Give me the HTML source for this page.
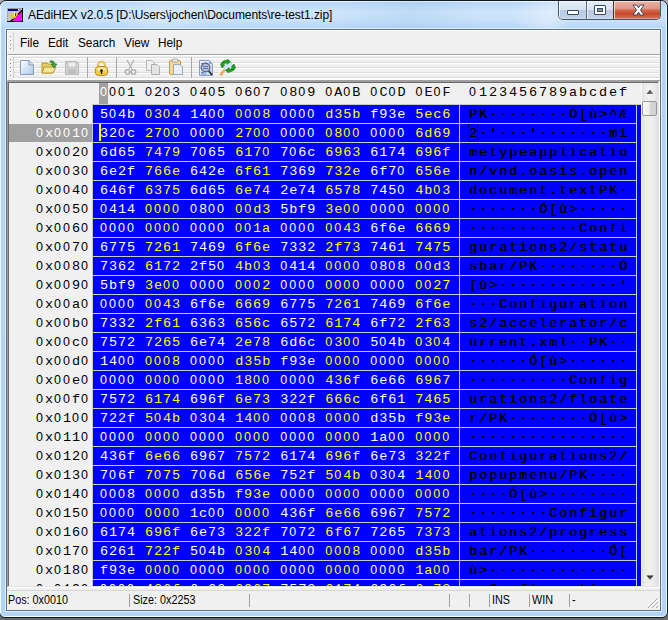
<!DOCTYPE html><html><head><meta charset="utf-8"><style>
*{margin:0;padding:0;box-sizing:border-box}
html,body{width:668px;height:620px;overflow:hidden;background:#6a6a6a}
body{position:relative;font-family:"Liberation Sans",sans-serif}
.a{position:absolute}
#frame{left:-1px;top:0;width:669px;height:618px;border:1px solid #101820;border-radius:7px 7px 6px 6px;overflow:hidden;
 background:linear-gradient(180deg,#b4d6f8 1px,#c4def9 6px,#cfe5fa 11px,#c8e0f9 20px,#b4d6f8 27px,#b4d4f4 40px,#b2d4f4 100%);}
#frame:before{content:"";position:absolute;left:0;top:0;right:0;bottom:0;border:1px solid rgba(240,250,255,.95);border-radius:6px 6px 5px 5px}
#streak{left:0;top:1px;width:668px;height:27px;background:linear-gradient(105deg,rgba(255,255,255,0) 120px,rgba(255,255,255,.22) 160px,rgba(255,255,255,0) 220px,rgba(150,190,230,0) 330px,rgba(150,190,230,.25) 400px,rgba(150,190,230,0) 470px,rgba(255,255,255,0) 500px,rgba(255,255,255,.35) 535px,rgba(255,255,255,0) 560px)}
#title{left:28px;top:8px;font-size:12px;color:#000;white-space:nowrap;letter-spacing:-0.07px}
#client{left:6px;top:29px;width:655px;height:582px;border:1px solid #5e7084;background:#f0f0f0}
.mono{font-family:"Liberation Mono",monospace;font-size:13.5px;line-height:18px;white-space:pre;letter-spacing:0.9px}
.asc{letter-spacing:1.9px !important;text-shadow:0.6px 0 0 #000}
.z{font-family:"Liberation Sans",sans-serif;font-size:12.5px;letter-spacing:2.05px;line-height:0;font-weight:normal}
.asc .z{letter-spacing:3.05px}
.menu{font-size:12px;color:#000;top:36px;white-space:nowrap;transform:scaleX(0.98);transform-origin:0 0}
.grip{width:1px;height:1px;background:#8c8c8c;box-shadow:1px 1px 0 #fff}
.sep{width:1px;background:#b8b8b8;border-right:1px solid #fff}
.hl{background:#ffffff}
.status{font-size:12px;color:#000;top:593px;white-space:nowrap;transform:scaleX(0.9);transform-origin:0 0}
.ssep{top:594px;width:1px;height:13px;background:#a0a0a0}
</style></head><body>
<div class="a" style="left:0;top:0;width:668px;height:10px;background:#a8a8a8"></div>
<div id="frame" class="a"></div>
<div id="streak" class="a"></div>
<div class="a" style="left:5px;top:28px;width:657px;height:584px;border:1px solid #dcefff"></div>
<svg class="a" style="left:7px;top:8px" width="16" height="14" viewBox="0 0 16 14" shape-rendering="crispEdges">
<rect x="0" y="0" width="16" height="14" fill="#c4c4c4"/>
<rect x="0" y="0" width="16" height="1" fill="#9a9aa8"/>
<rect x="0" y="0" width="1" height="14" fill="#a8a8a8"/>
<rect x="1" y="1" width="10" height="2" fill="#0a0a88"/>
<rect x="11" y="1" width="4" height="2" fill="#9c9c9c"/>
<rect x="11" y="1" width="1" height="1" fill="#fff"/><rect x="14" y="1" width="1" height="1" fill="#fff"/>
<polygon points="15,3 15,13 4,13" fill="#ff10ff" shape-rendering="auto"/>
<rect x="15" y="0" width="1" height="14" fill="#000"/>
<rect x="0" y="13" width="16" height="1" fill="#101010"/>
<line x1="15.5" y1="2" x2="3.5" y2="13.5" stroke="#000" stroke-width="1.3" shape-rendering="auto"/>
<rect x="7" y="8" width="1" height="1" fill="#c000c0"/><rect x="10" y="8" width="1" height="1" fill="#c000c0"/><rect x="13" y="6" width="1" height="1" fill="#c000c0"/>
<rect x="7" y="11" width="1" height="1" fill="#c000c0"/><rect x="10" y="11" width="1" height="1" fill="#c000c0"/><rect x="13" y="9" width="1" height="1" fill="#c000c0"/><rect x="13" y="12" width="1" height="1" fill="#c000c0"/>
<path d="M3 8 L6 5 L8 6 L10 5 L11 7 L8 10 L6 11Z" fill="#d8d020" shape-rendering="auto"/>
<rect x="7" y="4" width="1" height="4" fill="#f8f8f8"/><rect x="8" y="5" width="1" height="3" fill="#404040"/>
</svg>
<div id="title" class="a">AEdiHEX v2.0.5 [D:\Users\jochen\Documents\re-test1.zip]</div>
<div class="a" style="left:558px;top:1px;width:103px;height:19px;border:1px solid #4a5664;border-top:none;border-radius:0 0 5px 5px;overflow:hidden">
 <div class="a" style="left:0;top:0;width:28px;height:18px;background:linear-gradient(#e4edf7 0,#d6e2f0 50%,#b9cde4 52%,#bccfe6 85%,#cddcee 100%);border-right:1px solid #5a6a7c;box-shadow:inset 1px 1px 0 rgba(255,255,255,.7)"></div>
 <div class="a" style="left:28px;top:0;width:27px;height:18px;background:linear-gradient(#e4edf7 0,#d6e2f0 50%,#b9cde4 52%,#bccfe6 85%,#cddcee 100%);border-right:1px solid #5a2a20;box-shadow:inset 1px 1px 0 rgba(255,255,255,.7)"></div>
 <div class="a" style="left:55px;top:0;width:48px;height:18px;background:linear-gradient(#eab0a4 0,#e09a8a 40%,#d5674c 52%,#c8482c 70%,#d27058 100%);box-shadow:inset 1px 1px 0 rgba(255,230,225,.8),inset -1px -1px 0 rgba(255,200,190,.5)"></div>
 <div class="a" style="left:8px;top:9px;width:12px;height:5px;background:#fff;border:1px solid #3b4858;border-radius:1px"></div>
 <div class="a" style="left:35px;top:4px;width:12px;height:10px;background:#fff;border:1px solid #3b4858;border-radius:1px"></div>
 <div class="a" style="left:38px;top:7px;width:6px;height:4px;background:#8aa0b8;border:1px solid #3b4858"></div>
 <svg class="a" style="left:73px;top:3px" width="13" height="12" viewBox="0 0 13 12"><polygon points="1,1 4.6,1 6.5,3.8 8.4,1 12,1 8.5,6 12,11 8.4,11 6.5,8.2 4.6,11 1,11 4.5,6" fill="#fff" stroke="#3b4858" stroke-width="1" stroke-linejoin="round"/></svg>
</div>
<div id="client" class="a"></div>
<div class="a" style="left:7px;top:30px;width:653px;height:25px;background:#f0f0f0;border-top:1px solid #fff;border-left:1px solid #fff;border-bottom:1px solid #a0a0a0"></div>
<div class="a grip" style="left:10px;top:36px"></div>
<div class="a grip" style="left:10px;top:40px"></div>
<div class="a grip" style="left:10px;top:44px"></div>
<div class="a grip" style="left:10px;top:48px"></div>
<div class="a" style="left:13px;top:32px;width:1px;height:20px;background:#d0d0d0"></div>
<div class="a menu" style="left:20px">File</div>
<div class="a menu" style="left:48px">Edit</div>
<div class="a menu" style="left:78px">Search</div>
<div class="a menu" style="left:124px">View</div>
<div class="a menu" style="left:158px">Help</div>
<div class="a" style="left:7px;top:55px;width:653px;height:26px;background:#f0f0f0;border-top:1px solid #ffffff;border-left:1px solid #fff;border-bottom:1px solid #a0a0a0"></div>
<div class="a" style="left:14px;top:57px;width:645px;height:1px;background:#dcdcdc"></div><div class="a" style="left:14px;top:62px;width:645px;height:1px;background:#dcdcdc"></div><div class="a" style="left:14px;top:67px;width:645px;height:1px;background:#dcdcdc"></div><div class="a" style="left:14px;top:72px;width:645px;height:1px;background:#dcdcdc"></div><div class="a" style="left:14px;top:77px;width:645px;height:1px;background:#dcdcdc"></div><div class="a" style="left:14px;top:58px;width:645px;height:1px;background:#ffffff"></div><div class="a" style="left:14px;top:63px;width:645px;height:1px;background:#ffffff"></div><div class="a" style="left:14px;top:68px;width:645px;height:1px;background:#ffffff"></div><div class="a" style="left:14px;top:73px;width:645px;height:1px;background:#ffffff"></div><div class="a" style="left:14px;top:78px;width:645px;height:1px;background:#ffffff"></div><div class="a" style="left:14px;top:79px;width:645px;height:1px;background:#ffffff"></div>
<div class="a grip" style="left:10px;top:59px"></div>
<div class="a grip" style="left:10px;top:63px"></div>
<div class="a grip" style="left:10px;top:67px"></div>
<div class="a grip" style="left:10px;top:71px"></div>
<div class="a grip" style="left:10px;top:75px"></div>
<div class="a" style="left:13px;top:57px;width:1px;height:21px;background:#d0d0d0"></div>
<div class="a" style="left:87px;top:57px;width:1px;height:21px;background:#a8a8a8"></div>
<div class="a" style="left:116px;top:57px;width:1px;height:21px;background:#a8a8a8"></div>
<div class="a" style="left:191px;top:57px;width:1px;height:21px;background:#a8a8a8"></div>

<svg class="a" style="left:19px;top:59px" width="16" height="17" viewBox="0 0 16 17">
 <defs><linearGradient id="gd" x1="0" y1="0" x2="1" y2="1"><stop offset="0" stop-color="#ffffff"/><stop offset="1" stop-color="#a9c9ea"/></linearGradient></defs>
 <path d="M1.5 1.5 H10 L14.5 6 V15.5 H1.5Z" fill="url(#gd)" stroke="#8a9ab8"/>
 <path d="M10 1.5 V6 H14.5" fill="#c8dcf2" stroke="#8a9ab8"/>
</svg>
<svg class="a" style="left:41px;top:59px" width="17" height="16" viewBox="0 0 17 16">
 <path d="M1 4 H6 L7 5 H12 V14 H1Z" fill="#e9cf6a" stroke="#b8962a"/>
 <path d="M3 8 H15 L12 14 H1Z" fill="#f6e59a" stroke="#b8962a"/>
 <path d="M9 2 Q13 1 14 5 L16 5 L13 9 L10 5 L12 5 Q11 3 9 3Z" fill="#3ca43c" stroke="#207020" stroke-width="0.6"/>
</svg>
<svg class="a" style="left:64px;top:60px" width="16" height="16" viewBox="0 0 16 16">
 <path d="M1.5 1.5 H13 L14.5 3 V14.5 H1.5Z" fill="#d0d0d0" stroke="#b8b8b8"/>
 <rect x="4" y="2" width="8" height="5" fill="#ececec" stroke="#c0c0c0" stroke-width="0.8"/>
 <rect x="4" y="9.5" width="8" height="5" fill="#bdbdbd" stroke="#c8c8c8" stroke-width="0.8"/>
</svg>
<svg class="a" style="left:94px;top:60px" width="15" height="17" viewBox="0 0 15 17">
 <path d="M4 7 V5 A3.5 3.3 0 0 1 11 5 V7" fill="none" stroke="#d8a830" stroke-width="2"/>
 <path d="M4 7 V5 A3.5 3.3 0 0 1 11 5 V7" fill="none" stroke="#f8e080" stroke-width="0.8"/>
 <rect x="1.3" y="6.5" width="12.4" height="9" rx="3.5" fill="#f5cc48" stroke="#b88a20"/>
 <rect x="2.5" y="7.5" width="10" height="3" rx="1.5" fill="#fae8a0"/>
 <path d="M7.5 10 V14" stroke="#181818" stroke-width="1.4"/><circle cx="7.5" cy="10.5" r="1.3" fill="#181818"/>
</svg>
<svg class="a" style="left:124px;top:59px" width="13" height="17" viewBox="0 0 13 17">
 <path d="M3 1 L8 10 M10 1 L5 10" stroke="#b0b0b0" stroke-width="1.3"/>
 <circle cx="3.5" cy="13" r="2.3" fill="none" stroke="#a8a8a8" stroke-width="1.3"/>
 <circle cx="9.5" cy="13" r="2.3" fill="none" stroke="#a8a8a8" stroke-width="1.3"/>
</svg>
<svg class="a" style="left:145px;top:59px" width="16" height="17" viewBox="0 0 16 17">
 <path d="M1.5 1.5 H7 L9.5 4 V11.5 H1.5Z" fill="#f0f0f0" stroke="#b8b8b8"/>
 <path d="M6.5 5.5 H12 L14.5 8 V15.5 H6.5Z" fill="#e4e4e4" stroke="#b0b0b0"/>
</svg>
<svg class="a" style="left:168px;top:58px" width="16" height="18" viewBox="0 0 16 18">
 <rect x="1.5" y="2.5" width="11" height="14" rx="1.5" fill="#f2d795" stroke="#d19a32"/>
 <rect x="4" y="1" width="6" height="3" rx="1" fill="#e8e8e8" stroke="#9a9a9a" stroke-width="0.8"/>
 <path d="M5.5 6.5 H12 L14.5 9 V16.5 H5.5Z" fill="#e8eff8" stroke="#9aaac0"/>
</svg>
<svg class="a" style="left:198px;top:59px" width="16" height="18" viewBox="0 0 16 18">
 <defs><linearGradient id="fd" x1="0" y1="0" x2="1" y2="1"><stop offset="0" stop-color="#f4f8ff"/><stop offset="1" stop-color="#b8d4f0"/></linearGradient></defs>
 <path d="M1.5 1.5 H11 L14.5 5 V16.5 H1.5Z" fill="url(#fd)" stroke="#8c9ad4"/>
 <path d="M11 1.5 V5 H14.5Z" fill="#78a8e8"/>
 <path d="M3 4.5 H6 M3 13.5 H6 M3 15 H8" stroke="#6a88d0" stroke-width="1"/>
 <circle cx="7.5" cy="8.5" r="4.3" fill="#b4c4ea" stroke="#6a6a70" stroke-width="1.4"/>
 <path d="M5 7.5 H10 M5 9.5 H10" stroke="#5a70b0" stroke-width="1"/>
 <path d="M10.8 12 L14 16" stroke="#2a2a2a" stroke-width="1.8"/>
</svg>
<svg class="a" style="left:219px;top:59px" width="18" height="18" viewBox="0 0 18 18">
 <path d="M5 11.5 L2 15.5" stroke="#f0a850" stroke-width="2.6" stroke-linecap="round"/>
 <circle cx="9" cy="7.2" r="4.6" fill="#d0e6f6" stroke="#9ac0e0" stroke-width="0.8"/>
 <path d="M1.5 5.5 Q3 1 8.5 1.2 L8 0 L11.5 2.5 L8 5.5 L8.4 3.8 Q5 3.8 4.2 6.2 L5.8 6 L3 9Z" fill="#1ea01e" stroke="#0a6a0a" stroke-width="0.5"/>
 <path d="M16.5 8.5 Q15 13 9.5 12.8 L10 14 L6.5 11.5 L10 8.5 L9.6 10.2 Q13 10.2 13.8 7.8 L12.2 8 L15 5Z" fill="#1ea01e" stroke="#0a6a0a" stroke-width="0.5"/>
</svg>

<div class="a" style="left:7px;top:81px;width:653px;height:1px;background:#a0a0a0"></div>
<div class="a" style="left:7px;top:81px;width:1px;height:506px;background:#a0a0a0"></div>
<div class="a" style="left:8px;top:82px;width:651px;height:1px;background:#696969"></div>
<div class="a" style="left:8px;top:82px;width:1px;height:504px;background:#696969"></div>
<div class="a" style="left:8px;top:586px;width:651px;height:1px;background:#e3e3e3"></div>
<div class="a" style="left:7px;top:587px;width:653px;height:1px;background:#ffffff"></div>
<div class="a" style="left:658px;top:82px;width:1px;height:505px;background:#e3e3e3"></div>
<div class="a" style="left:659px;top:81px;width:1px;height:507px;background:#ffffff"></div>
<div class="a" style="left:9px;top:83px;width:632px;height:503px;background:#f0f0f0;overflow:hidden" id="hexv">
<div class="a" style="left:83px;top:21px;width:549px;height:482px;background:#c8c8c8"></div>
<div class="a" style="left:90px;top:0px;width:9px;height:21px;background:#a0a0a0"></div>
<div class="a mono" style="left:91px;top:1px;color:#000"><span style="color:#fff"><span class="z">0</span></span><span class="z">00</span>1 <span class="z">0</span>2<span class="z">0</span>3 <span class="z">0</span>4<span class="z">0</span>5 <span class="z">0</span>6<span class="z">0</span>7 <span class="z">0</span>8<span class="z">0</span>9 <span class="z">0</span>A<span class="z">0</span>B <span class="z">0</span>C<span class="z">0</span>D <span class="z">0</span>E<span class="z">0</span>F</div>
<div class="a mono asc" style="left:460px;top:1px;color:#000;font-weight:normal;text-shadow:none"><span class="z">0</span>123456789abcdef</div>
<div class="a" style="left:84px;top:22px;width:366px;height:18px;background:#0000ff"></div>
<div class="a" style="left:451px;top:22px;width:176px;height:18px;background:#0000ff"></div>
<div class="a mono" style="left:27px;top:23px;color:#000"><span class="z">0</span>x<span class="z">0000</span></div>
<div class="a mono" style="left:91px;top:23px"><span style="color:#ffffff">5<span class="z">0</span>4b</span> <span style="color:#ffff00"><span class="z">0</span>3<span class="z">0</span>4</span> <span style="color:#ffffff">14<span class="z">00</span></span> <span style="color:#ffff00"><span class="z">000</span>8</span> <span style="color:#ffffff"><span class="z">0000</span></span> <span style="color:#ffff00">d35b</span> <span style="color:#ffffff">f93e</span> <span style="color:#ffff00">5ec6</span></div>
<div class="a mono asc" style="left:460px;top:23px;color:#000">PK········Ó[ù&gt;^Æ</div>
<div class="a" style="left:84px;top:41px;width:366px;height:18px;background:#0000ff"></div>
<div class="a" style="left:451px;top:41px;width:176px;height:18px;background:#0000ff"></div>
<div class="a" style="left:0px;top:41px;width:83px;height:18px;background:#a0a0a0"></div>
<div class="a mono" style="left:27px;top:42px;color:#fff"><span class="z">0</span>x<span class="z">00</span>1<span class="z">0</span></div>
<div class="a mono" style="left:91px;top:42px"><span style="color:#ffffff">32<span class="z">0</span>c</span> <span style="color:#ffff00">27<span class="z">00</span></span> <span style="color:#ffffff"><span class="z">0000</span></span> <span style="color:#ffff00">27<span class="z">00</span></span> <span style="color:#ffffff"><span class="z">0000</span></span> <span style="color:#ffff00"><span class="z">0</span>8<span class="z">00</span></span> <span style="color:#ffffff"><span class="z">0000</span></span> <span style="color:#ffff00">6d69</span></div>
<div class="a mono asc" style="left:460px;top:42px;color:#000">2·&#x27;···&#x27;·······mi</div>
<div class="a" style="left:84px;top:60px;width:366px;height:18px;background:#0000ff"></div>
<div class="a" style="left:451px;top:60px;width:176px;height:18px;background:#0000ff"></div>
<div class="a mono" style="left:27px;top:61px;color:#000"><span class="z">0</span>x<span class="z">00</span>2<span class="z">0</span></div>
<div class="a mono" style="left:91px;top:61px"><span style="color:#ffffff">6d65</span> <span style="color:#ffff00">7479</span> <span style="color:#ffffff">7<span class="z">0</span>65</span> <span style="color:#ffff00">617<span class="z">0</span></span> <span style="color:#ffffff">7<span class="z">0</span>6c</span> <span style="color:#ffff00">6963</span> <span style="color:#ffffff">6174</span> <span style="color:#ffff00">696f</span></div>
<div class="a mono asc" style="left:460px;top:61px;color:#000">metypeapplicatio</div>
<div class="a" style="left:84px;top:79px;width:366px;height:18px;background:#0000ff"></div>
<div class="a" style="left:451px;top:79px;width:176px;height:18px;background:#0000ff"></div>
<div class="a mono" style="left:27px;top:80px;color:#000"><span class="z">0</span>x<span class="z">00</span>3<span class="z">0</span></div>
<div class="a mono" style="left:91px;top:80px"><span style="color:#ffffff">6e2f</span> <span style="color:#ffff00">766e</span> <span style="color:#ffffff">642e</span> <span style="color:#ffff00">6f61</span> <span style="color:#ffffff">7369</span> <span style="color:#ffff00">732e</span> <span style="color:#ffffff">6f7<span class="z">0</span></span> <span style="color:#ffff00">656e</span></div>
<div class="a mono asc" style="left:460px;top:80px;color:#000">n/vnd.oasis.open</div>
<div class="a" style="left:84px;top:98px;width:366px;height:18px;background:#0000ff"></div>
<div class="a" style="left:451px;top:98px;width:176px;height:18px;background:#0000ff"></div>
<div class="a mono" style="left:27px;top:99px;color:#000"><span class="z">0</span>x<span class="z">00</span>4<span class="z">0</span></div>
<div class="a mono" style="left:91px;top:99px"><span style="color:#ffffff">646f</span> <span style="color:#ffff00">6375</span> <span style="color:#ffffff">6d65</span> <span style="color:#ffff00">6e74</span> <span style="color:#ffffff">2e74</span> <span style="color:#ffff00">6578</span> <span style="color:#ffffff">745<span class="z">0</span></span> <span style="color:#ffff00">4b<span class="z">0</span>3</span></div>
<div class="a mono asc" style="left:460px;top:99px;color:#000">document.textPK·</div>
<div class="a" style="left:84px;top:117px;width:366px;height:18px;background:#0000ff"></div>
<div class="a" style="left:451px;top:117px;width:176px;height:18px;background:#0000ff"></div>
<div class="a mono" style="left:27px;top:118px;color:#000"><span class="z">0</span>x<span class="z">00</span>5<span class="z">0</span></div>
<div class="a mono" style="left:91px;top:118px"><span style="color:#ffffff"><span class="z">0</span>414</span> <span style="color:#ffff00"><span class="z">0000</span></span> <span style="color:#ffffff"><span class="z">0</span>8<span class="z">00</span></span> <span style="color:#ffff00"><span class="z">00</span>d3</span> <span style="color:#ffffff">5bf9</span> <span style="color:#ffff00">3e<span class="z">00</span></span> <span style="color:#ffffff"><span class="z">0000</span></span> <span style="color:#ffff00"><span class="z">0000</span></span></div>
<div class="a mono asc" style="left:460px;top:118px;color:#000">·······Ó[ù&gt;·····</div>
<div class="a" style="left:84px;top:136px;width:366px;height:18px;background:#0000ff"></div>
<div class="a" style="left:451px;top:136px;width:176px;height:18px;background:#0000ff"></div>
<div class="a mono" style="left:27px;top:137px;color:#000"><span class="z">0</span>x<span class="z">00</span>6<span class="z">0</span></div>
<div class="a mono" style="left:91px;top:137px"><span style="color:#ffffff"><span class="z">0000</span></span> <span style="color:#ffff00"><span class="z">0000</span></span> <span style="color:#ffffff"><span class="z">0000</span></span> <span style="color:#ffff00"><span class="z">00</span>1a</span> <span style="color:#ffffff"><span class="z">0000</span></span> <span style="color:#ffff00"><span class="z">00</span>43</span> <span style="color:#ffffff">6f6e</span> <span style="color:#ffff00">6669</span></div>
<div class="a mono asc" style="left:460px;top:137px;color:#000">···········Confi</div>
<div class="a" style="left:84px;top:155px;width:366px;height:18px;background:#0000ff"></div>
<div class="a" style="left:451px;top:155px;width:176px;height:18px;background:#0000ff"></div>
<div class="a mono" style="left:27px;top:156px;color:#000"><span class="z">0</span>x<span class="z">00</span>7<span class="z">0</span></div>
<div class="a mono" style="left:91px;top:156px"><span style="color:#ffffff">6775</span> <span style="color:#ffff00">7261</span> <span style="color:#ffffff">7469</span> <span style="color:#ffff00">6f6e</span> <span style="color:#ffffff">7332</span> <span style="color:#ffff00">2f73</span> <span style="color:#ffffff">7461</span> <span style="color:#ffff00">7475</span></div>
<div class="a mono asc" style="left:460px;top:156px;color:#000">gurations2/statu</div>
<div class="a" style="left:84px;top:174px;width:366px;height:18px;background:#0000ff"></div>
<div class="a" style="left:451px;top:174px;width:176px;height:18px;background:#0000ff"></div>
<div class="a mono" style="left:27px;top:175px;color:#000"><span class="z">0</span>x<span class="z">00</span>8<span class="z">0</span></div>
<div class="a mono" style="left:91px;top:175px"><span style="color:#ffffff">7362</span> <span style="color:#ffff00">6172</span> <span style="color:#ffffff">2f5<span class="z">0</span></span> <span style="color:#ffff00">4b<span class="z">0</span>3</span> <span style="color:#ffffff"><span class="z">0</span>414</span> <span style="color:#ffff00"><span class="z">0000</span></span> <span style="color:#ffffff"><span class="z">0</span>8<span class="z">0</span>8</span> <span style="color:#ffff00"><span class="z">00</span>d3</span></div>
<div class="a mono asc" style="left:460px;top:175px;color:#000">sbar/PK········Ó</div>
<div class="a" style="left:84px;top:193px;width:366px;height:18px;background:#0000ff"></div>
<div class="a" style="left:451px;top:193px;width:176px;height:18px;background:#0000ff"></div>
<div class="a mono" style="left:27px;top:194px;color:#000"><span class="z">0</span>x<span class="z">00</span>9<span class="z">0</span></div>
<div class="a mono" style="left:91px;top:194px"><span style="color:#ffffff">5bf9</span> <span style="color:#ffff00">3e<span class="z">00</span></span> <span style="color:#ffffff"><span class="z">0000</span></span> <span style="color:#ffff00"><span class="z">000</span>2</span> <span style="color:#ffffff"><span class="z">0000</span></span> <span style="color:#ffff00"><span class="z">0000</span></span> <span style="color:#ffffff"><span class="z">0000</span></span> <span style="color:#ffff00"><span class="z">00</span>27</span></div>
<div class="a mono asc" style="left:460px;top:194px;color:#000">[ù&gt;············&#x27;</div>
<div class="a" style="left:84px;top:212px;width:366px;height:18px;background:#0000ff"></div>
<div class="a" style="left:451px;top:212px;width:176px;height:18px;background:#0000ff"></div>
<div class="a mono" style="left:27px;top:213px;color:#000"><span class="z">0</span>x<span class="z">00</span>a<span class="z">0</span></div>
<div class="a mono" style="left:91px;top:213px"><span style="color:#ffffff"><span class="z">0000</span></span> <span style="color:#ffff00"><span class="z">00</span>43</span> <span style="color:#ffffff">6f6e</span> <span style="color:#ffff00">6669</span> <span style="color:#ffffff">6775</span> <span style="color:#ffff00">7261</span> <span style="color:#ffffff">7469</span> <span style="color:#ffff00">6f6e</span></div>
<div class="a mono asc" style="left:460px;top:213px;color:#000">···Configuration</div>
<div class="a" style="left:84px;top:231px;width:366px;height:18px;background:#0000ff"></div>
<div class="a" style="left:451px;top:231px;width:176px;height:18px;background:#0000ff"></div>
<div class="a mono" style="left:27px;top:232px;color:#000"><span class="z">0</span>x<span class="z">00</span>b<span class="z">0</span></div>
<div class="a mono" style="left:91px;top:232px"><span style="color:#ffffff">7332</span> <span style="color:#ffff00">2f61</span> <span style="color:#ffffff">6363</span> <span style="color:#ffff00">656c</span> <span style="color:#ffffff">6572</span> <span style="color:#ffff00">6174</span> <span style="color:#ffffff">6f72</span> <span style="color:#ffff00">2f63</span></div>
<div class="a mono asc" style="left:460px;top:232px;color:#000">s2/accelerator/c</div>
<div class="a" style="left:84px;top:250px;width:366px;height:18px;background:#0000ff"></div>
<div class="a" style="left:451px;top:250px;width:176px;height:18px;background:#0000ff"></div>
<div class="a mono" style="left:27px;top:251px;color:#000"><span class="z">0</span>x<span class="z">00</span>c<span class="z">0</span></div>
<div class="a mono" style="left:91px;top:251px"><span style="color:#ffffff">7572</span> <span style="color:#ffff00">7265</span> <span style="color:#ffffff">6e74</span> <span style="color:#ffff00">2e78</span> <span style="color:#ffffff">6d6c</span> <span style="color:#ffff00"><span class="z">0</span>3<span class="z">00</span></span> <span style="color:#ffffff">5<span class="z">0</span>4b</span> <span style="color:#ffff00"><span class="z">0</span>3<span class="z">0</span>4</span></div>
<div class="a mono asc" style="left:460px;top:251px;color:#000">urrent.xml··PK··</div>
<div class="a" style="left:84px;top:269px;width:366px;height:18px;background:#0000ff"></div>
<div class="a" style="left:451px;top:269px;width:176px;height:18px;background:#0000ff"></div>
<div class="a mono" style="left:27px;top:270px;color:#000"><span class="z">0</span>x<span class="z">00</span>d<span class="z">0</span></div>
<div class="a mono" style="left:91px;top:270px"><span style="color:#ffffff">14<span class="z">00</span></span> <span style="color:#ffff00"><span class="z">000</span>8</span> <span style="color:#ffffff"><span class="z">0000</span></span> <span style="color:#ffff00">d35b</span> <span style="color:#ffffff">f93e</span> <span style="color:#ffff00"><span class="z">0000</span></span> <span style="color:#ffffff"><span class="z">0000</span></span> <span style="color:#ffff00"><span class="z">0000</span></span></div>
<div class="a mono asc" style="left:460px;top:270px;color:#000">······Ó[ù&gt;······</div>
<div class="a" style="left:84px;top:288px;width:366px;height:18px;background:#0000ff"></div>
<div class="a" style="left:451px;top:288px;width:176px;height:18px;background:#0000ff"></div>
<div class="a mono" style="left:27px;top:289px;color:#000"><span class="z">0</span>x<span class="z">00</span>e<span class="z">0</span></div>
<div class="a mono" style="left:91px;top:289px"><span style="color:#ffffff"><span class="z">0000</span></span> <span style="color:#ffff00"><span class="z">0000</span></span> <span style="color:#ffffff"><span class="z">0000</span></span> <span style="color:#ffff00">18<span class="z">00</span></span> <span style="color:#ffffff"><span class="z">0000</span></span> <span style="color:#ffff00">436f</span> <span style="color:#ffffff">6e66</span> <span style="color:#ffff00">6967</span></div>
<div class="a mono asc" style="left:460px;top:289px;color:#000">··········Config</div>
<div class="a" style="left:84px;top:307px;width:366px;height:18px;background:#0000ff"></div>
<div class="a" style="left:451px;top:307px;width:176px;height:18px;background:#0000ff"></div>
<div class="a mono" style="left:27px;top:308px;color:#000"><span class="z">0</span>x<span class="z">00</span>f<span class="z">0</span></div>
<div class="a mono" style="left:91px;top:308px"><span style="color:#ffffff">7572</span> <span style="color:#ffff00">6174</span> <span style="color:#ffffff">696f</span> <span style="color:#ffff00">6e73</span> <span style="color:#ffffff">322f</span> <span style="color:#ffff00">666c</span> <span style="color:#ffffff">6f61</span> <span style="color:#ffff00">7465</span></div>
<div class="a mono asc" style="left:460px;top:308px;color:#000">urations2/floate</div>
<div class="a" style="left:84px;top:326px;width:366px;height:18px;background:#0000ff"></div>
<div class="a" style="left:451px;top:326px;width:176px;height:18px;background:#0000ff"></div>
<div class="a mono" style="left:27px;top:327px;color:#000"><span class="z">0</span>x<span class="z">0</span>1<span class="z">00</span></div>
<div class="a mono" style="left:91px;top:327px"><span style="color:#ffffff">722f</span> <span style="color:#ffff00">5<span class="z">0</span>4b</span> <span style="color:#ffffff"><span class="z">0</span>3<span class="z">0</span>4</span> <span style="color:#ffff00">14<span class="z">00</span></span> <span style="color:#ffffff"><span class="z">000</span>8</span> <span style="color:#ffff00"><span class="z">0000</span></span> <span style="color:#ffffff">d35b</span> <span style="color:#ffff00">f93e</span></div>
<div class="a mono asc" style="left:460px;top:327px;color:#000">r/PK········Ó[ù&gt;</div>
<div class="a" style="left:84px;top:345px;width:366px;height:18px;background:#0000ff"></div>
<div class="a" style="left:451px;top:345px;width:176px;height:18px;background:#0000ff"></div>
<div class="a mono" style="left:27px;top:346px;color:#000"><span class="z">0</span>x<span class="z">0</span>11<span class="z">0</span></div>
<div class="a mono" style="left:91px;top:346px"><span style="color:#ffffff"><span class="z">0000</span></span> <span style="color:#ffff00"><span class="z">0000</span></span> <span style="color:#ffffff"><span class="z">0000</span></span> <span style="color:#ffff00"><span class="z">0000</span></span> <span style="color:#ffffff"><span class="z">0000</span></span> <span style="color:#ffff00"><span class="z">0000</span></span> <span style="color:#ffffff">1a<span class="z">00</span></span> <span style="color:#ffff00"><span class="z">0000</span></span></div>
<div class="a mono asc" style="left:460px;top:346px;color:#000">················</div>
<div class="a" style="left:84px;top:364px;width:366px;height:18px;background:#0000ff"></div>
<div class="a" style="left:451px;top:364px;width:176px;height:18px;background:#0000ff"></div>
<div class="a mono" style="left:27px;top:365px;color:#000"><span class="z">0</span>x<span class="z">0</span>12<span class="z">0</span></div>
<div class="a mono" style="left:91px;top:365px"><span style="color:#ffffff">436f</span> <span style="color:#ffff00">6e66</span> <span style="color:#ffffff">6967</span> <span style="color:#ffff00">7572</span> <span style="color:#ffffff">6174</span> <span style="color:#ffff00">696f</span> <span style="color:#ffffff">6e73</span> <span style="color:#ffff00">322f</span></div>
<div class="a mono asc" style="left:460px;top:365px;color:#000">Configurations2/</div>
<div class="a" style="left:84px;top:383px;width:366px;height:18px;background:#0000ff"></div>
<div class="a" style="left:451px;top:383px;width:176px;height:18px;background:#0000ff"></div>
<div class="a mono" style="left:27px;top:384px;color:#000"><span class="z">0</span>x<span class="z">0</span>13<span class="z">0</span></div>
<div class="a mono" style="left:91px;top:384px"><span style="color:#ffffff">7<span class="z">0</span>6f</span> <span style="color:#ffff00">7<span class="z">0</span>75</span> <span style="color:#ffffff">7<span class="z">0</span>6d</span> <span style="color:#ffff00">656e</span> <span style="color:#ffffff">752f</span> <span style="color:#ffff00">5<span class="z">0</span>4b</span> <span style="color:#ffffff"><span class="z">0</span>3<span class="z">0</span>4</span> <span style="color:#ffff00">14<span class="z">00</span></span></div>
<div class="a mono asc" style="left:460px;top:384px;color:#000">popupmenu/PK····</div>
<div class="a" style="left:84px;top:402px;width:366px;height:18px;background:#0000ff"></div>
<div class="a" style="left:451px;top:402px;width:176px;height:18px;background:#0000ff"></div>
<div class="a mono" style="left:27px;top:403px;color:#000"><span class="z">0</span>x<span class="z">0</span>14<span class="z">0</span></div>
<div class="a mono" style="left:91px;top:403px"><span style="color:#ffffff"><span class="z">000</span>8</span> <span style="color:#ffff00"><span class="z">0000</span></span> <span style="color:#ffffff">d35b</span> <span style="color:#ffff00">f93e</span> <span style="color:#ffffff"><span class="z">0000</span></span> <span style="color:#ffff00"><span class="z">0000</span></span> <span style="color:#ffffff"><span class="z">0000</span></span> <span style="color:#ffff00"><span class="z">0000</span></span></div>
<div class="a mono asc" style="left:460px;top:403px;color:#000">····Ó[ù&gt;········</div>
<div class="a" style="left:84px;top:421px;width:366px;height:18px;background:#0000ff"></div>
<div class="a" style="left:451px;top:421px;width:176px;height:18px;background:#0000ff"></div>
<div class="a mono" style="left:27px;top:422px;color:#000"><span class="z">0</span>x<span class="z">0</span>15<span class="z">0</span></div>
<div class="a mono" style="left:91px;top:422px"><span style="color:#ffffff"><span class="z">0000</span></span> <span style="color:#ffff00"><span class="z">0000</span></span> <span style="color:#ffffff">1c<span class="z">00</span></span> <span style="color:#ffff00"><span class="z">0000</span></span> <span style="color:#ffffff">436f</span> <span style="color:#ffff00">6e66</span> <span style="color:#ffffff">6967</span> <span style="color:#ffff00">7572</span></div>
<div class="a mono asc" style="left:460px;top:422px;color:#000">········Configur</div>
<div class="a" style="left:84px;top:440px;width:366px;height:18px;background:#0000ff"></div>
<div class="a" style="left:451px;top:440px;width:176px;height:18px;background:#0000ff"></div>
<div class="a mono" style="left:27px;top:441px;color:#000"><span class="z">0</span>x<span class="z">0</span>16<span class="z">0</span></div>
<div class="a mono" style="left:91px;top:441px"><span style="color:#ffffff">6174</span> <span style="color:#ffff00">696f</span> <span style="color:#ffffff">6e73</span> <span style="color:#ffff00">322f</span> <span style="color:#ffffff">7<span class="z">0</span>72</span> <span style="color:#ffff00">6f67</span> <span style="color:#ffffff">7265</span> <span style="color:#ffff00">7373</span></div>
<div class="a mono asc" style="left:460px;top:441px;color:#000">ations2/progress</div>
<div class="a" style="left:84px;top:459px;width:366px;height:18px;background:#0000ff"></div>
<div class="a" style="left:451px;top:459px;width:176px;height:18px;background:#0000ff"></div>
<div class="a mono" style="left:27px;top:460px;color:#000"><span class="z">0</span>x<span class="z">0</span>17<span class="z">0</span></div>
<div class="a mono" style="left:91px;top:460px"><span style="color:#ffffff">6261</span> <span style="color:#ffff00">722f</span> <span style="color:#ffffff">5<span class="z">0</span>4b</span> <span style="color:#ffff00"><span class="z">0</span>3<span class="z">0</span>4</span> <span style="color:#ffffff">14<span class="z">00</span></span> <span style="color:#ffff00"><span class="z">000</span>8</span> <span style="color:#ffffff"><span class="z">0000</span></span> <span style="color:#ffff00">d35b</span></div>
<div class="a mono asc" style="left:460px;top:460px;color:#000">bar/PK········Ó[</div>
<div class="a" style="left:84px;top:478px;width:366px;height:18px;background:#0000ff"></div>
<div class="a" style="left:451px;top:478px;width:176px;height:18px;background:#0000ff"></div>
<div class="a mono" style="left:27px;top:479px;color:#000"><span class="z">0</span>x<span class="z">0</span>18<span class="z">0</span></div>
<div class="a mono" style="left:91px;top:479px"><span style="color:#ffffff">f93e</span> <span style="color:#ffff00"><span class="z">0000</span></span> <span style="color:#ffffff"><span class="z">0000</span></span> <span style="color:#ffff00"><span class="z">0000</span></span> <span style="color:#ffffff"><span class="z">0000</span></span> <span style="color:#ffff00"><span class="z">0000</span></span> <span style="color:#ffffff"><span class="z">0000</span></span> <span style="color:#ffff00">1a<span class="z">00</span></span></div>
<div class="a mono asc" style="left:460px;top:479px;color:#000">ù&gt;··············</div>
<div class="a" style="left:84px;top:497px;width:366px;height:18px;background:#0000ff"></div>
<div class="a" style="left:451px;top:497px;width:176px;height:18px;background:#0000ff"></div>
<div class="a mono" style="left:27px;top:498px;color:#000"><span class="z">0</span>x<span class="z">0</span>19<span class="z">0</span></div>
<div class="a mono" style="left:91px;top:498px"><span style="color:#ffffff"><span class="z">0000</span></span> <span style="color:#ffff00">436f</span> <span style="color:#ffffff">6e66</span> <span style="color:#ffff00">6967</span> <span style="color:#ffffff">7572</span> <span style="color:#ffff00">6174</span> <span style="color:#ffffff">696f</span> <span style="color:#ffff00">6e73</span></div>
<div class="a mono asc" style="left:460px;top:498px;color:#000">··Configurations</div>
<div class="a" style="left:628px;top:22px;width:4px;height:481px;background:#0000ff"></div>
<div class="a" style="left:90px;top:41px;width:2px;height:17px;background:#ffff00"></div>
<div class="a" style="left:459px;top:41px;width:10px;height:18px;border:1px dotted #000"></div>
</div>
<div class="a" style="left:641px;top:83px;width:18px;height:503px;background:linear-gradient(90deg,#fcfcfc 0,#fcfcfc 1px,#e0e0e0 1px,#ececec 4px,#f0f0f0 8px,#ececec 13px,#e2e2e2 16px,#e3e3e3 17px)"></div>
<svg class="a" style="left:645px;top:89px" width="10" height="6" viewBox="0 0 10 6"><defs><linearGradient id="ua" x1="0" y1="0" x2="1" y2="1"><stop offset="0" stop-color="#202020"/><stop offset="1" stop-color="#909090"/></linearGradient></defs><path d="M1.5 5 L5 0.8 L8.5 5Z" fill="url(#ua)"/></svg>
<div class="a" style="left:642px;top:101px;width:15px;height:15px;border:1px solid #9a9a9a;border-radius:2px;background:linear-gradient(90deg,#fafafa 0,#ececec 50%,#d8d8d8 50%,#d0d0d0 100%)"></div>
<svg class="a" style="left:645px;top:575px" width="10" height="6" viewBox="0 0 10 6"><defs><linearGradient id="da" x1="0" y1="0" x2="0" y2="1"><stop offset="0" stop-color="#202020"/><stop offset="1" stop-color="#808080"/></linearGradient></defs><path d="M1.5 0.5 L8.5 0.5 L5 5Z" fill="url(#da)"/></svg>
<div class="a" style="left:7px;top:590px;width:653px;height:1px;background:#d7d7d7"></div>
<div class="a ssep" style="left:129px"></div>
<div class="a ssep" style="left:249px"></div>
<div class="a ssep" style="left:449px"></div>
<div class="a ssep" style="left:469px"></div>
<div class="a ssep" style="left:489px"></div>
<div class="a ssep" style="left:529px"></div>
<div class="a ssep" style="left:569px"></div>
<div class="a status" style="left:8px">Pos: 0x0010</div>
<div class="a status" style="left:133px">Size: 0x2253</div>
<div class="a status" style="left:492px">INS</div>
<div class="a status" style="left:532px">WIN</div>
<div class="a status" style="left:572px">-</div>
<svg class="a" style="left:647px;top:597px" width="12" height="12" viewBox="0 0 12 12">
<path d="M11 1 L1 11 M11 5 L5 11 M11 9 L9 11" stroke="#a8a8a8" stroke-width="1"/>
<path d="M11.5 2 L2 11.5 M11.5 6 L6 11.5" stroke="#fff" stroke-width="0.8"/>
</svg>
</body></html>
